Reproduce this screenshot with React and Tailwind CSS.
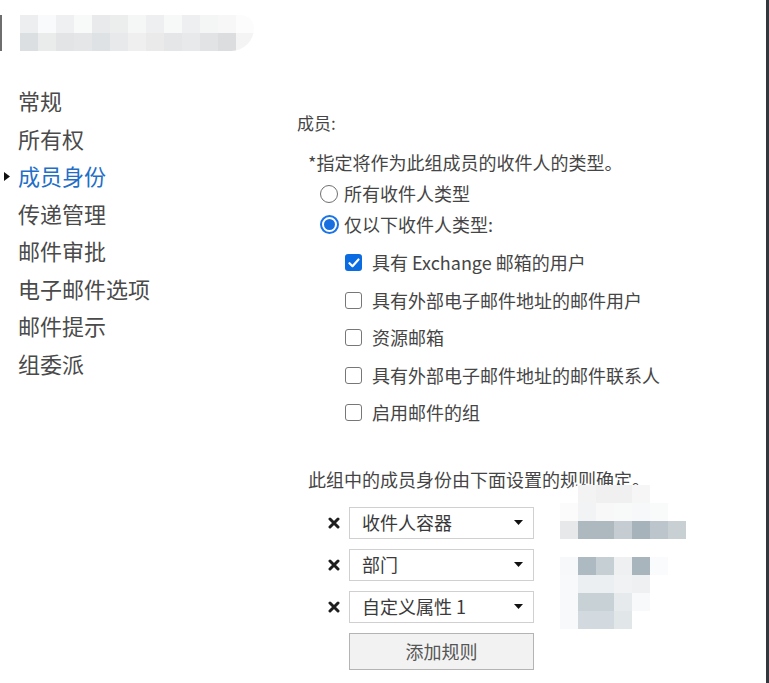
import { Fragment } from 'react'

const NAV_ITEMS = ['常规', '所有权', '成员身份', '传递管理', '邮件审批', '电子邮件选项', '邮件提示', '组委派']
const ACTIVE = '成员身份'

const RECIPIENT_TYPES = [
  { label: '具有 Exchange 邮箱的用户', checked: true },
  { label: '具有外部电子邮件地址的邮件用户', checked: false },
  { label: '资源邮箱', checked: false },
  { label: '具有外部电子邮件地址的邮件联系人', checked: false },
  { label: '启用邮件的组', checked: false },
]

const RULES = ['收件人容器', '部门', '自定义属性 1']

// pixelated (redacted) title
const TITLE_MOSAIC = [
  ['bg-[#eceeef]', 'bg-[#f9fafb]', 'bg-[#eef0f1]', 'bg-[#f8f9f9]', 'bg-[#e8eaeb]', 'bg-[#eceeee]', 'bg-[#f5f6f6]', 'bg-[#eeeff0]', 'bg-[#f7f8f8]', 'bg-[#eeeff0]', 'bg-[#f4f5f5]', 'bg-[#f7f7f7]', 'bg-[#fcfcfc]'],
  ['bg-[#dcdfe1]', 'bg-[#eaebeb]', 'bg-[#e2e4e5]', 'bg-[#e4e6e7]', 'bg-[#dee2e4]', 'bg-[#e7e9ea]', 'bg-[#efefef]', 'bg-[#ebeaeb]', 'bg-[#e5e6e8]', 'bg-[#e8e9ea]', 'bg-[#e2e3e4]', 'bg-[#dcdddf]', 'bg-[#f4f4f5]'],
]

// pixelated (redacted) notes beside the rules
const SIDE_MOSAIC = [
  ['bg-white', 'bg-[#f3f3f3]', 'bg-[#f0f0f0]', 'bg-[#f0f0f0]', 'bg-[#f6f6f6]', 'bg-white', 'bg-white'],
  ['bg-[#fbfbfb]', 'bg-[#f2f3f4]', 'bg-[#f8f8f9]', 'bg-[#f8f9f9]', 'bg-[#f7f8f9]', 'bg-[#f9fafa]', 'bg-white'],
  ['bg-[#e6e8ea]', 'bg-[#aeb8bf]', 'bg-[#aeb8bf]', 'bg-[#c5cdd2]', 'bg-[#a7b3bb]', 'bg-[#bcc5cb]', 'bg-[#c8d0d4]'],
  ['bg-white', 'bg-white', 'bg-white', 'bg-white', 'bg-white', 'bg-white', 'bg-white'],
  ['bg-[#f7f8f9]', 'bg-[#aebac1]', 'bg-[#c6cfd4]', 'bg-[#eef0f1]', 'bg-[#a8b5bd]', 'bg-[#fafbfc]', 'bg-white'],
  ['bg-[#f8f9fa]', 'bg-[#eceff1]', 'bg-[#eceff1]', 'bg-[#f0f2f3]', 'bg-[#eef0f2]', 'bg-white', 'bg-white'],
  ['bg-[#f8f9fa]', 'bg-[#c8d1d6]', 'bg-[#c8d1d6]', 'bg-[#e6eaec]', 'bg-[#f8f9fa]', 'bg-white', 'bg-white'],
  ['bg-[#f8f9fa]', 'bg-[#d3dadf]', 'bg-[#d3dadf]', 'bg-[#e1e6e9]', 'bg-white', 'bg-white', 'bg-white'],
]

function Radio({ checked }) {
  if (checked) {
    return (
      <span className="w-[19px] h-[19px] rounded-full border-2 border-[#1a73e8] flex items-center justify-center">
        <span className="w-[11px] h-[11px] rounded-full bg-[#1a6fe0]" />
      </span>
    )
  }
  return <span className="w-[18px] h-[18px] rounded-full border-[1.5px] border-[#6f6f6f]" />
}

function Checkbox({ checked }) {
  if (checked) {
    return (
      <span className="w-[17px] h-[17px] rounded-[3px] bg-[#0b6be0] flex items-center justify-center">
        <svg width="12" height="10" viewBox="0 0 12 10" fill="none">
          <path d="M1.5 5.2 L4.5 8.2 L10.5 1.5" stroke="white" strokeWidth="2.2" strokeLinecap="round" strokeLinejoin="round" />
        </svg>
      </span>
    )
  }
  return <span className="w-[17px] h-[17px] rounded-[3px] border-[1.5px] border-[#777]" />
}

function RemoveIcon() {
  return (
    <svg width="12" height="12" viewBox="0 0 12 12" className="shrink-0">
      <path d="M2 2 L10 10 M10 2 L2 10" stroke="#1f1f1f" strokeWidth="3" strokeLinecap="round" />
    </svg>
  )
}

function RuleSelect({ value }) {
  return (
    <div className="flex items-center gap-[9px] h-[32px]">
      <RemoveIcon />
      <div className="w-[185px] h-full bg-white border border-[#d0d0d0] flex items-center justify-between pl-[12px] pr-[10px]">
        <span className="text-[18px] text-[#3a3a3a]">{value}</span>
        <svg width="9" height="5" viewBox="0 0 9 5">
          <path d="M0 0 H9 L4.5 5 Z" fill="#111" />
        </svg>
      </div>
    </div>
  )
}

export default function App() {
  return (
    <div className="w-[769px] h-[683px] bg-white flex overflow-hidden font-['Noto_Sans_CJK_SC',sans-serif] text-[#454545]">
      <div className="flex-1 flex flex-col">
        {/* Header (title is pixelated) */}
        <div className="pt-[15px] flex items-stretch h-[51px]">
          <div className="w-[2px] bg-[#6e6e6e]" />
          <div className="ml-[18px] flex flex-col rounded-tr-[14px] rounded-br-[24px] overflow-hidden">
            {TITLE_MOSAIC.map((row, r) => (
              <div key={r} className="flex">
                {row.map((c, i) => (
                  <span key={i} className={`w-[18px] h-[18px] ${c}`} />
                ))}
              </div>
            ))}
          </div>
        </div>

        <div className="flex flex-1">
          {/* Side navigation */}
          <nav className="w-[297px] pt-[31px] flex flex-col">
            {NAV_ITEMS.map((item) => (
              <div key={item} className="relative h-[37.5px] flex items-center pl-[18px] text-[22px]">
                {item === ACTIVE && (
                  <svg width="6" height="9" viewBox="0 0 6 9" className="absolute left-[4px] top-[15px]">
                    <path d="M0 0 L6 4.5 L0 9 Z" fill="#111" />
                  </svg>
                )}
                <span className={item === ACTIVE ? 'text-[#1f6fc8]' : 'text-[#4a4a4a]'}>{item}</span>
              </div>
            ))}
          </nav>

          {/* Membership panel */}
          <div className="relative flex-1 flex flex-col">
            <div className="mt-[60px] h-[24px] flex items-center text-[17px]">成员:</div>

            <div className="mt-[11px] ml-[11px] h-[32px] flex items-center text-[18px]">
              *指定将作为此组成员的收件人的类型。
            </div>

            <div className="ml-[23px] h-[31px] flex items-center gap-[6px] text-[18px]">
              <Radio checked={false} />
              <span>所有收件人类型</span>
            </div>
            <div className="ml-[23px] h-[31px] flex items-center gap-[5px] text-[18px]">
              <Radio checked />
              <span>仅以下收件人类型:</span>
            </div>

            <div className="mt-[4px] ml-[48px] flex flex-col">
              {RECIPIENT_TYPES.map((t) => (
                <div key={t.label} className="h-[37.5px] flex items-center gap-[10px] text-[18px]">
                  <Checkbox checked={t.checked} />
                  <span>{t.label}</span>
                </div>
              ))}
            </div>

            <div className="mt-[33px] ml-[11px] h-[30px] flex items-center text-[18px]">
              此组中的成员身份由下面设置的规则确定。
            </div>

            <div className="mt-[12px] ml-[31px] flex flex-col gap-[10px]">
              {RULES.map((r) => (
                <Fragment key={r}>
                  <RuleSelect value={r} />
                </Fragment>
              ))}
              <button className="ml-[21px] w-[185px] h-[37px] bg-[#f2f2f2] border border-[#b4b4b4] text-[18px] text-[#555]">
                添加规则
              </button>
            </div>

            {/* pixelated notes overlay */}
            <div className="absolute left-[263px] top-[434px] flex flex-col rounded-tl-[22px] rounded-br-[30px] overflow-hidden">
              {SIDE_MOSAIC.map((row, r) => (
                <div key={r} className="flex">
                  {row.map((c, i) => (
                    <span key={i} className={`w-[18px] h-[18px] ${c}`} />
                  ))}
                </div>
              ))}
            </div>
          </div>
        </div>
      </div>

      <div className="w-[3px] bg-[#33363c]" />
    </div>
  )
}
